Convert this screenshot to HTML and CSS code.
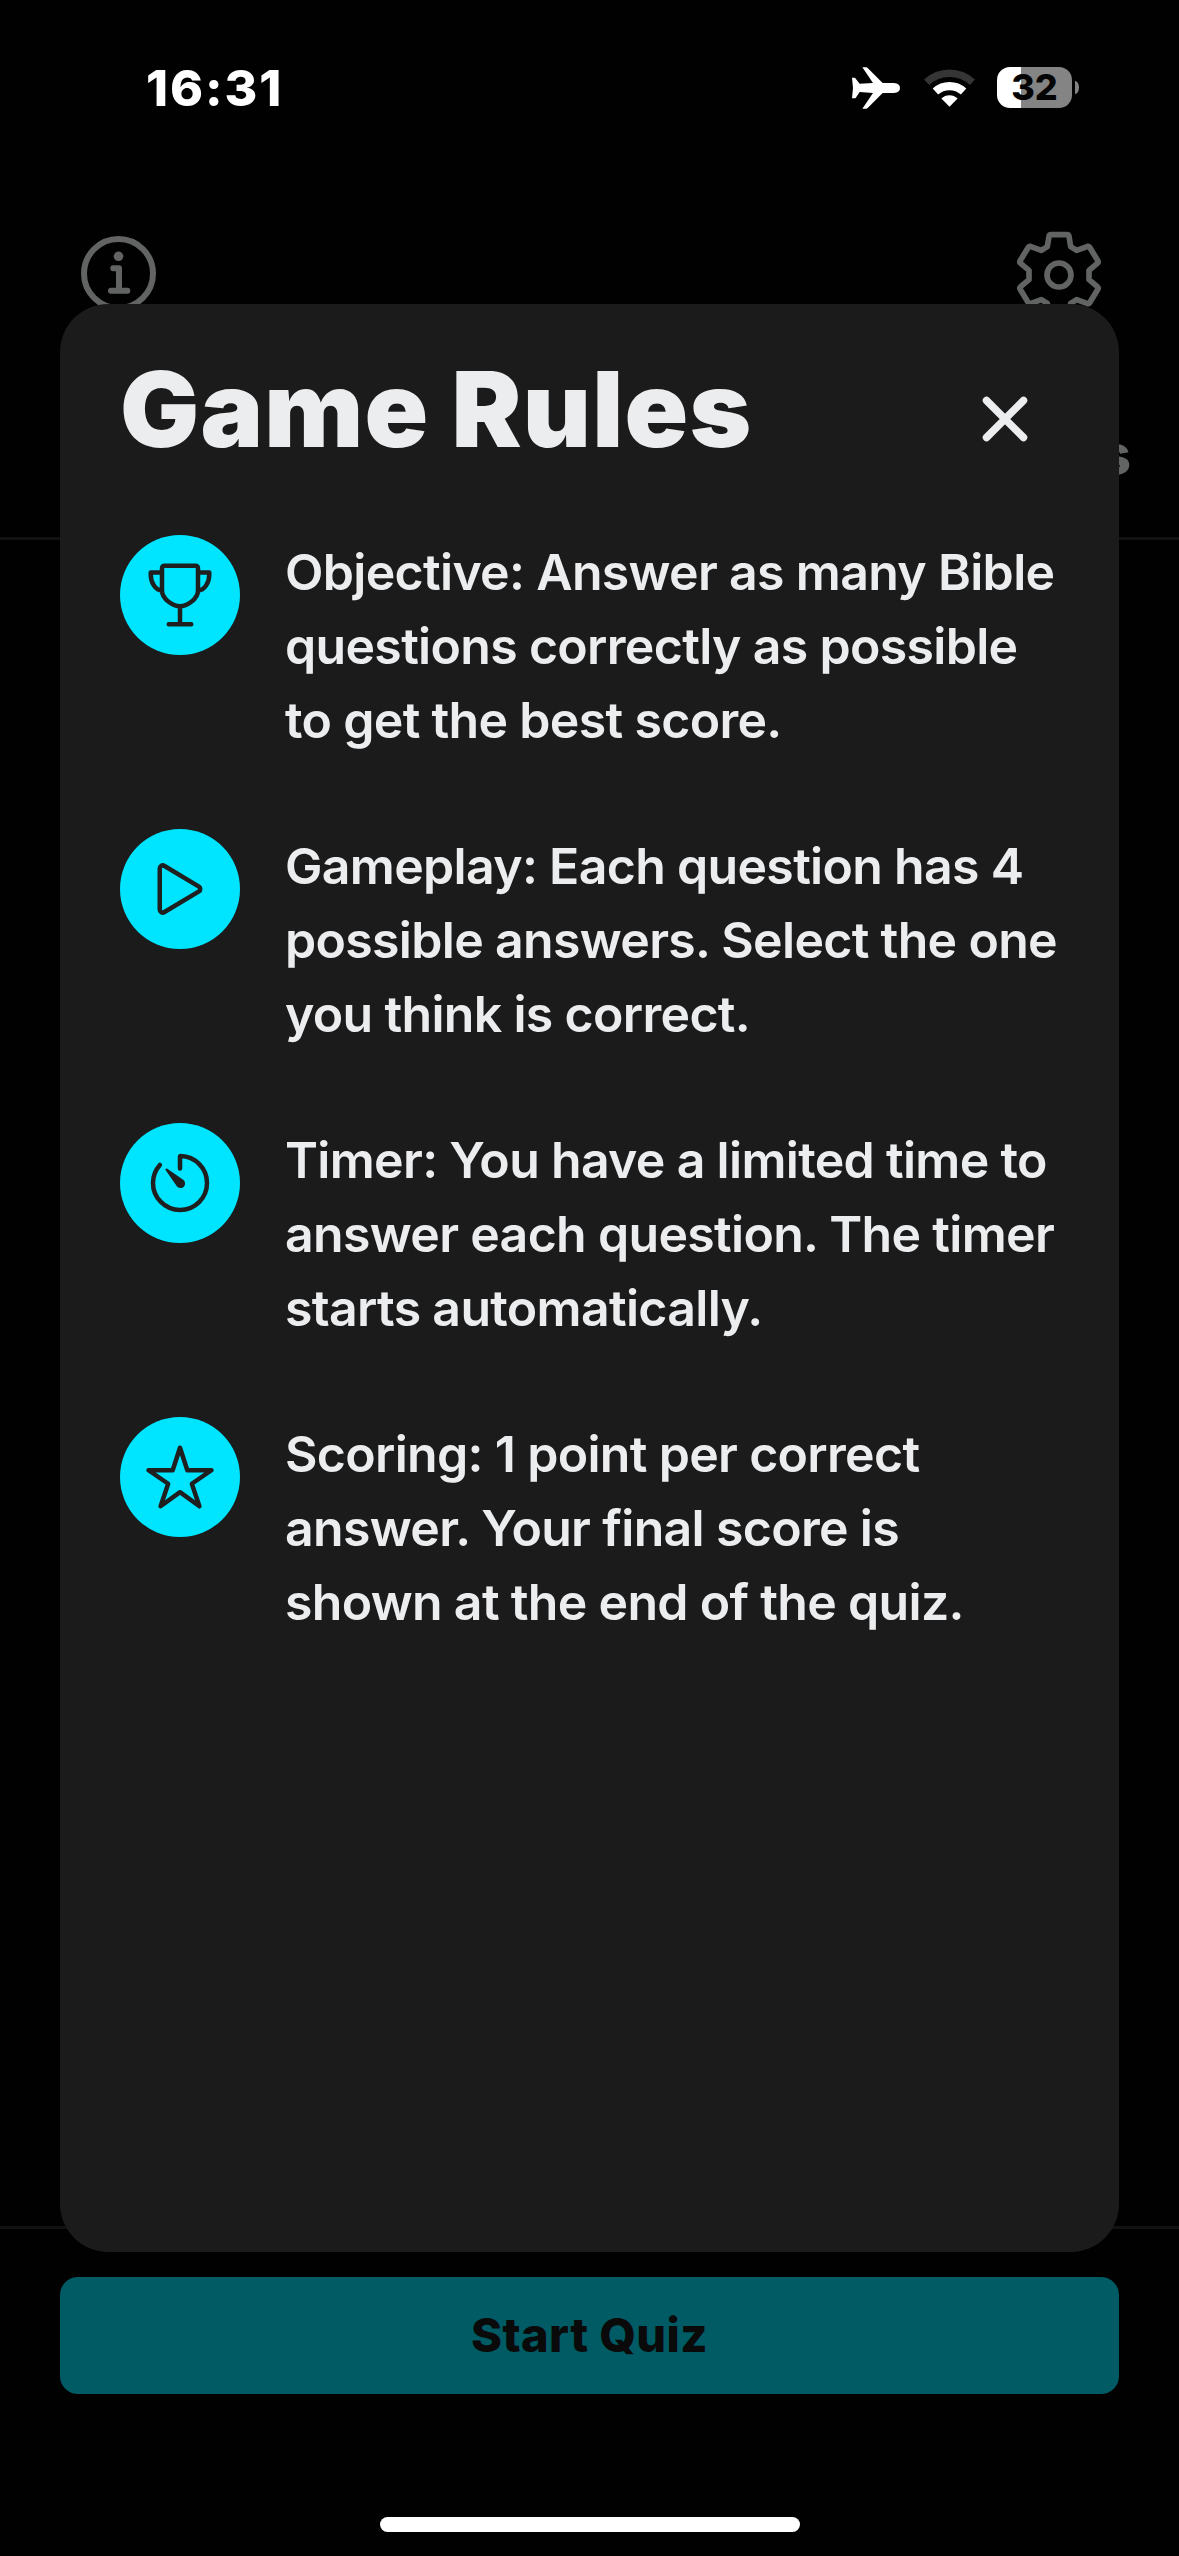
FILE: index.html
```html
<!DOCTYPE html>
<html lang="en">

<head>
    <meta charset="UTF-8">
    <meta name="viewport" content="width=device-width, initial-scale=1.0">
    <title>Game Rules</title>
    <link rel="stylesheet" href="styles.css">
</head>

<body>
    <div class="screen">
        <div class="status-bar">
            <span class="time">16:31</span>
            <div class="status-icons">
                <svg class="plane" viewBox="0 0 144 126">
                    <path d="M0 32h9l14 18 40-2L31 1h11q3 0 5 2l45 45h34q18 2 18 15t-18 15H92l-45 45q-2 2-5 2H31l32-47-40-3-12 18q-1 1-3 1H0l3-31z" />
                </svg>
                <svg class="wifi" viewBox="0 0 150 112">
                    <path class="wifi-off" d="M7.5 39.3A99 99 0 0 1 142.500 39.3" />
                    <path class="wifi-on" d="M33.500 66.500A62 62 0 0 1 116.500 66.500" />
                    <path class="wifi-dot" d="M75 111L51 87a34 34 0 0 1 48 0z" />
                </svg>
                <div class="battery">
                    <span class="level">32</span>
                </div>
                <div class="battery-tip"></div>
            </div>
        </div>

        <div class="toolbar">
            <svg class="info-icon" viewBox="0 0 75 75">
                <circle cx="37.5" cy="37.5" r="34.5" />
                <circle class="dot" cx="37.5" cy="20.3" r="4.8" />
                <path d="M32.300 32.300h5.700v22M30 54.800h16.300" />
            </svg>
            <svg class="gear-icon" viewBox="-135 -135 270 270">
                <circle r="36" />
                <path d="M-24-121H24Q29-121 30-116L35-85 53-74 86-86Q90-87 92-83L117-42Q119-38 115-35L90-14V14L115 35Q119 38 117 42L92 83Q90 87 86 86L53 74 35 85 30 116Q29 121 24 121H-24Q-29 121-30 116L-35 85-53 74-86 86Q-90 87-92 83L-117 42Q-119 38-115 35L-90 14V-14L-115-35Q-119-38-117-42L-92-83Q-90-87-86-86L-53-74-35-85-30-116Q-29-121-24-121Z" />
            </svg>
        </div>

        <div class="heading-row">s</div>
        <div class="content"></div>
        <div class="footer">
            <button class="start-button">Start Quiz</button>
        </div>
        <div class="home-bar"></div>
    </div>

    <div class="modal">
        <div class="modal-header">
            <h1>Game Rules</h1>
            <svg class="close-icon" viewBox="0 0 46 46">
                <path d="M4.500 4.500l37 37M41.500 4.500l-37 37" />
            </svg>
        </div>
        <div class="rules">
            <div class="rule">
                <div class="rule-icon">
                    <svg viewBox="0 0 512 512">
                        <path d="M176 464h160M256 464V336M384 224c0-50.640-.08-134.630-.12-160a16 16 0 0 0-16-16l-223.790.26a16 16 0 0 0-16 15.950c0 30.580-.13 129.170-.13 159.790 0 64.280 83 112 128 112s128-47.720 128-112zM128 96H48v16c0 55.220 33.550 112 80 112M384 96h80v16c0 55.220-33.550 112-80 112" />
                    </svg>
                </div>
                <p>Objective: Answer as many Bible<br>questions correctly as possible<br>to get the best score.</p>
            </div>
            <div class="rule">
                <div class="rule-icon">
                    <svg viewBox="0 0 512 512">
                        <path d="M112 111v290c0 17.440 17 28.520 31 20.160l247.900-148.370c12.120-7.250 12.120-26.330 0-33.580L143 90.840c-14-8.360-31 2.720-31 20.160z" />
                    </svg>
                </div>
                <p>Gameplay: Each question has 4<br>possible answers. Select the one<br>you think is correct.</p>
            </div>
            <div class="rule">
                <div class="rule-icon">
                    <svg viewBox="0 0 512 512">
                        <path d="M112.910 128A191.850 191.850 0 0 0 64 254c-1.180 106.350 85.650 193.800 192 194 106.200.2 192-85.830 192-192 0-104.540-83.550-189.610-187.500-192a4.360 4.360 0 0 0-4.500 4.370V152" />
                        <path class="hand" d="M233.380 278.630l-79-113a8.130 8.130 0 0 1 11.320-11.320l113 79a32.500 32.500 0 0 1-37.250 53.260 33.210 33.210 0 0 1-8.070-7.940z" />
                    </svg>
                </div>
                <p>Timer: You have a limited time to<br>answer each question. The timer<br>starts automatically.</p>
            </div>
            <div class="rule">
                <div class="rule-icon">
                    <svg viewBox="0 0 512 512">
                        <path d="M480 208H308L256 48l-52 160H32l140 96-54 160 138-100 138 100-54-160z" />
                    </svg>
                </div>
                <p>Scoring: 1 point per correct<br>answer. Your final score is<br>shown at the end of the quiz.</p>
            </div>
        </div>
    </div>
</body>

</html>
```

FILE: styles.css
```css
* {
    box-sizing: border-box;
}

body {
    margin: 0;
    background: #010101;
    font-family: 'Inter', 'Liberation Sans', sans-serif;
    overflow: hidden;
}

.screen {
    display: flex;
    flex-direction: column;
    width: 1179px;
    height: 2556px;
}

.status-bar {
    display: flex;
    justify-content: space-between;
    height: 177px;
    padding: 58px 100px 0 146px;
    color: #fff;
}

.time {
    font-size: 50px;
    font-weight: 800;
    line-height: 60px;
    letter-spacing: 1.9px;
}

.status-icons {
    display: flex;
    align-items: center;
    height: 59px;
}

.plane {
    width: 48px;
    height: 42px;
    margin-right: 24px;
    fill: #fff;
}

.wifi {
    width: 51px;
    height: 38px;
    margin-right: 22px;
    fill: none;
}

.wifi-off {
    stroke: #353535;
    stroke-width: 22;
}

.wifi-on {
    stroke: #fff;
    stroke-width: 24;
}

.wifi-dot {
    fill: #fff;
}

.battery {
    width: 75px;
    height: 41px;
    border-radius: 13px;
    background: linear-gradient(to right, #fff 24px, #848484 24px);
    text-align: center;
}

.level {
    color: #040404;
    font-size: 36px;
    font-weight: 800;
    line-height: 41px;
}

.battery-tip {
    width: 4px;
    height: 13px;
    margin-left: 3px;
    border-radius: 0 4px 4px 0 / 0 7px 7px 0;
    background: #848484;
}

.toolbar {
    display: flex;
    justify-content: space-between;
    align-items: center;
    height: 196px;
    padding: 0 75px 0 81px;
}

.info-icon,
.gear-icon {
    fill: none;
    stroke: #626463;
    stroke-linecap: round;
    stroke-linejoin: round;
}

.info-icon {
    width: 75px;
    height: 75px;
    margin-bottom: 3px;
    stroke-width: 6;
}

.info-icon .dot {
    fill: #626463;
    stroke: none;
}

.gear-icon {
    width: 90px;
    height: 90px;
    stroke-width: 17;
}

.heading-row {
    height: 167px;
    padding: 48px 48px 0 0;
    border-bottom: 3px solid #111;
    color: #626463;
    font-size: 55px;
    font-weight: 800;
    line-height: 66px;
    text-align: right;
}

.content {
    height: 1689px;
    border-bottom: 3px solid #111;
}

.footer {
    height: 288px;
    padding: 48px 60px 0;
}

.start-button {
    display: block;
    width: 100%;
    height: 117px;
    padding: 0 0 2px;
    border: none;
    border-radius: 18px;
    background: #005b65;
    color: #0a0a0a;
    font-family: inherit;
    font-size: 47px;
    font-weight: 800;
    letter-spacing: 0.4px;
}

.home-bar {
    width: 420px;
    height: 15px;
    margin: 0 auto;
    border-radius: 8px;
    background: #fff;
}

/* 弹窗 */
.modal {
    position: absolute;
    top: 304px;
    left: 60px;
    width: 1059px;
    height: 1948px;
    padding: 60px;
    border-radius: 48px;
    background: #1b1b1b;
    color: #ecedef;
}

.modal-header {
    display: flex;
    justify-content: space-between;
    height: 171px;
    padding-right: 31px;
}

h1 {
    margin: -19px 0 0;
    font-size: 105px;
    font-weight: 900;
    line-height: 127px;
    letter-spacing: 1.2px;
}

.close-icon {
    width: 46px;
    height: 46px;
    margin-top: 32px;
    fill: none;
    stroke: #ecedef;
    stroke-width: 7.5;
    stroke-linecap: round;
}

.rules {
    display: flex;
    flex-direction: column;
    gap: 72px;
}

.rule {
    display: flex;
    gap: 45px;
    height: 222px;
}

.rule-icon {
    display: flex;
    flex-shrink: 0;
    justify-content: center;
    align-items: center;
    width: 120px;
    height: 120px;
    border-radius: 50%;
    background: #00e5ff;
}

.rule-icon svg {
    width: 72px;
    height: 72px;
    fill: none;
    stroke: #1f1f1f;
    stroke-width: 32;
    stroke-linecap: round;
    stroke-linejoin: round;
}

.rule-icon .hand {
    fill: #1f1f1f;
    stroke: none;
}

.rule p {
    margin: 0;
    font-size: 50px;
    font-weight: 600;
    line-height: 74px;
    letter-spacing: -0.68px;
    white-space: nowrap;
}
```
